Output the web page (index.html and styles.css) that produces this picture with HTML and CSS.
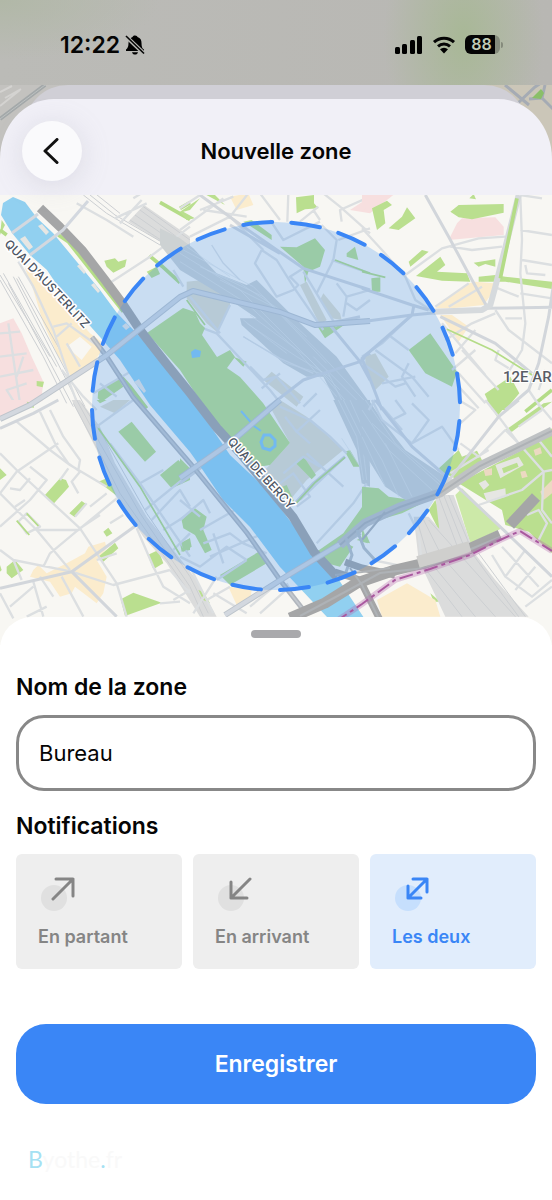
FILE: index.html
```html
<!DOCTYPE html>
<html lang="fr">
<head>
<meta charset="utf-8">
<meta name="viewport" content="width=device-width, initial-scale=1">
<title>Nouvelle zone</title>
<link rel="stylesheet" href="styles.css">
</head>
<body>
<div class="status">
  <div class="status-side">
    <span class="time">12:22</span>
    <svg class="bell" viewBox="0 0 20 22" aria-hidden="true"><path d="M10 1.500c1.600 0 2.300.8 2.500 1.500 3 1 4 3.300 4 6 0 4 .8 5.500 2.500 6.600v1.400H1v-1.400C2.800 14 3.400 12.800 3.500 9c0-3 1.300-5 4-6 .3-.8 1-1.500 2.500-1.500z"/><path d="M7 18.200h6c-.4 1.500-1.500 2.300-3 2.300s-2.600-.8-3-2.300z"/><path class="slash-gap" d="M0 1.500 19.500 20"/><path class="slash" d="M1 2 19 19.500"/></svg>
  </div>
  <div class="status-side">
    <svg class="signal" viewBox="0 0 28 18" aria-hidden="true"><rect x="0" y="11" width="5" height="7" rx="1.500"/><rect x="7" y="8" width="5" height="10" rx="1.500"/><rect x="15" y="4" width="5" height="14" rx="1.500"/><rect x="22" y="0" width="5" height="18" rx="1.500"/></svg>
    <svg class="wifi" viewBox="0 0 24 18" aria-hidden="true"><path class="arc" d="M2 6.200a14.500 14.500 0 0 1 20 0"/><path class="arc" d="M6 10.300a9 9 0 0 1 12 0"/><path d="M8 13.300a6 6 0 0 1 8 0L12 17.500z"/></svg>
    <div class="battery"><span>88</span></div>
  </div>
</div>

<header class="top">
  <svg class="backdrop" viewBox="0 85 552 110" preserveAspectRatio="xMidYMin slice" aria-hidden="true">
    <path fill="#c3c2bf" d="M0 85h276v110H0z"/><path fill="#cbc6b8" d="M276 85h276v110H276z"/>
    <g fill="none" stroke="#d4d3d1" stroke-width="2"><path d="M0 92l12-6M5 98l16-9M0 106l20-16"/></g>
    <path fill="none" stroke="#a3a8a9" stroke-width="4" d="M0 119 45 85"/><path fill="none" stroke="#bcc0c0" stroke-width="1" d="M0 119 45 85"/>
    <g fill="none" stroke="#a5abb4" stroke-width="3"><path d="M505 85l24 20M518 103l17-16 6-4M529 99l13-1 12 12M545 85l-3 13"/></g>
    <path fill="#8abf68" d="M532 98l9-9 3 4-3 6z"/>
  </svg>
  <div class="peek"></div>
  <nav class="nav">
    <button class="back" type="button" aria-label="Retour"><svg viewBox="0 0 16 26" aria-hidden="true"><path d="M14 1.500 2 13l12 11.500"/></svg></button>
    <h1>Nouvelle zone</h1>
    <span></span>
  </nav>
</header>

<svg class="map" viewBox="0 195 552 450" role="img" aria-label="Carte de la zone">
  <path class="land" d="M0 195h552v450H0z"/>

  <!-- north-west -->
  <g transform="translate(0 190) scale(.33333)">
    <path class="pink" d="M0 400 40 385 65 430 95 500 130 575 125 620 60 650 0 690z"/>
    <path class="sand" d="M75 235 100 240 130 290 190 340 270 430 310 460 300 490 270 530 220 570 170 490 130 400 100 300z"/>
    <path class="land" d="M200 470 240 440 275 470 245 510z"/>
    <path class="green" d="M313 212 345 205 355 215 380 208 375 230 340 248 320 230zM110 573l22 2-4 17-18-4zM80 635l20 3 2 15-20-2zM440 245l30-15 10 22-25 12zM5 90l10 15-15 30zM295 600l60-35 15 25-65 45-12-10z"/>
    <path class="yard" d="M432 45 570 140 570 210 490 160 385 95z"/>
    <g class="rail"><path d="M420 60 570 170M405 75 570 190M390 90 560 200M430 50 570 150M250 15 320 70 480 165M270 15 345 75 500 165M285 10 360 70"/><path d="M40 260 240 650M50 265 255 650M25 280 220 650M0 270 130 500 200 640M0 255 150 500M10 250 170 530M55 260 180 480"/></g>
    <g class="gline"><path d="M175 135 205 155 370 365M480 37 570 88M540 55 570 38M448 197 485 228 540 278M0 120 20 135M345 540 390 590 440 655"/></g>
    <g class="road"><path d="M55 215 100 290 160 420 210 570M160 410 200 400 290 465M200 460 240 530M170 440 215 400M335 275 450 200 570 110M345 85 440 40M360 100 425 30M230 40 320 90 400 140M400 25 440 0M0 430 60 425M0 500 80 490M0 560 100 540M25 400 45 540 60 640M45 640 20 600 80 580M70 500 50 560M280 610 400 540M205 570 240 660M185 540 250 620 290 660M300 580 350 620M550 290 520 240"/></g>
  </g>

  <!-- north -->
  <g transform="translate(180 190) scale(.33333)">
    <path class="sand" d="M150 20 205 10 220 45 170 60z"/>
    <path class="pink" d="M510 60 570 20 640 15 570 70z"/>
    <path class="tan" d="M20 275 70 270 150 325 150 345 110 425 80 400 20 325zM360 285 380 275 440 390 420 405zM430 310 480 370 485 390 455 385 420 330zM250 570 275 545 370 620 350 650z"/>
    <path class="green" d="M348 22 402 15 402 40 415 55 375 58 350 70zM300 170 350 172 405 145 435 180 420 230 385 245 375 280 370 230zM70 10 100 10 135 45zM0 65 60 25 30 60 10 65 45 85 20 90zM190 95 215 90 275 135 275 150zM410 405 500 400 435 445zM500 190 525 170 535 210 500 200zM160 500 200 515 190 530z"/>
    <path class="rail-yard" d="M-60 115 0 145 40 175 110 250 200 285 230 270 350 390 470 500 570 640 590 740 470 640 430 560 380 560 310 520 185 405 180 385 230 385 150 330 0 240-60 165z"/>
    <g class="rail light"><path d="M0 190 180 300 400 520 520 660M10 180 220 290 420 490 570 650M0 215 200 340 350 480 470 620M20 170 150 260M60 230 250 320 440 520M190 440 320 520 420 550M200 400 350 500 450 560M210 375 380 500 480 600M80 240 180 280 330 380M440 540 500 660M400 500 560 660M120 270 280 350 380 440M190 390 320 490"/></g>
    <path class="road thin" d="M95 165 130 220 180 270M190 440 300 505 400 550"/>
    <g class="road"><path d="M0 120 130 25M0 55 60 15M30 140 150 80 205 10M160 20 60 60M240 10 300 90M325 10 322 95M360 95 415 50M430 10 480 50 570 130M485 95 480 60 570 20M420 90 400 60M245 180 225 220 290 320 340 300 355 285 330 260 370 235M245 180 290 210 340 290 430 420M270 90 310 150 420 95M425 105 470 150 460 210 410 310M475 150 570 115M470 280 500 320 570 300M500 320 490 380M500 340 530 360 570 330M370 245 470 410M70 415 110 430 150 345M110 430 270 600 310 650M210 530 250 570 290 560 360 640M245 595 300 550M370 650 410 610M150 80 250 180M455 210 570 250M30 320 120 430M70 60 200 80"/></g>
    <g class="road mid"><path d="M60 15 190 110 370 235 570 300M150 105 300 190M450 405 540 515 570 570M450 400 540 380M430 550 540 515 570 490M240 670 370 570 430 550"/></g>
    <path class="gline thin" d="M20 330 75 405M465 210 570 250"/>
  </g>

  <!-- north-east -->
  <g transform="translate(362 190) scale(.33333)">
    <path class="pink" d="M0 15 90 15 60 40 0 60zM285 100 300 85 400 82 425 110 425 135 260 150z"/>
    <path class="sand" d="M220 355 260 320 320 280 340 275 395 280 390 310 365 345 270 355zM235 375 270 375 320 410 290 455z"/>
    <path class="green" d="M30 55 75 32 90 45 65 60 70 100 45 120 38 90zM80 115 120 80 135 52 160 85 110 120zM265 65 290 45 425 42 425 68 330 88 290 82zM322 25 335 12 342 28zM140 215 180 180 200 185 145 230zM162 258 235 200 250 225 225 245 315 250 325 275 240 272zM335 218 400 208 400 230 370 222 350 230zM350 260 400 255 430 260 570 275 570 297 430 275 350 275zM140 480 205 430 240 480 285 545 270 590 190 550zM368 612 445 560 472 610 430 660 390 660zM28 265 55 262 55 305 30 305z"/>
    <path class="tan" d="M10 500 40 490 80 560 40 600 10 540z"/>
    <g class="road"><path d="M130 255 240 175 350 145 430 140M265 170 330 180 420 170M475 20 480 150 475 250 490 400 480 480 440 545M475 120 570 135M480 210 570 225M490 225 495 250 550 255M475 310 570 325M475 15 540 25M395 290 470 320M220 350 320 280M260 350 360 290M0 115 60 180 130 260 160 330 220 370M250 450 330 400 400 370M240 400 370 555M280 490 340 420M300 480 410 600M270 540 340 480M400 360 440 420 570 520M430 385 480 385M410 480 400 510 440 535M0 500 60 460 150 375M80 435 140 480M0 520 60 560 100 590 130 580M40 480 150 560 200 620M290 550 370 640M290 590 350 655M500 600 540 660M550 540 530 600M140 520 120 560 160 620M60 580 160 560"/></g>
    <g class="road mid"><path d="M190 15 260 140 330 270 375 350M0 295 150 345 200 360M0 395 150 375 220 368M155 350 150 375 0 505 60 660M235 380 400 460 510 550M575 280 560 380 530 520 500 600 430 660M370 355 570 352"/></g>
    <g class="road big"><path d="M215 365 360 360 385 345 400 290 470 15"/></g>
    <g class="gline"><path d="M465 25 415 265M490 665 570 600"/></g>
    <g class="gline thin"><path d="M255 418 390 480 510 555M0 245 70 262"/></g>
  </g>

  <!-- south-west -->
  <g transform="translate(0 400) scale(.33333)">
    <path class="pink" d="M0 0 130 0 95 20 20 50 0 40z"/>
    <path class="sand" d="M100 510 115 495 140 520 200 490 255 460 265 440 315 425 320 445 290 480 320 530 310 580 290 610 225 560 215 580 180 590 150 545 90 530z"/>
    <path class="green" d="M135 285 180 235 198 240 207 260 160 312zM208 340 245 303 258 312 225 352zM80 5 105 10 90 20zM0 205 20 225 0 240zM20 500 45 480 70 510 35 535 20 520zM0 495 5 510 0 515zM310 395 325 383 337 400 320 410zM295 470 345 428 355 445 310 485zM295 245 320 235 360 270 350 287zM443 465 475 450 490 490 460 508zM362 598 400 578 485 608 375 648zM355 95 395 65 468 155 435 185zM480 225 535 180 570 215 570 240 515 265zM545 365 570 345 570 385zM540 430 570 415 570 450 545 455zM290 0 320 0 300 10z"/>
    <path class="tan" d="M300 20 340 0 390 0 345 40z"/>
    <path class="yard" d="M215 0 240 0 300 80 345 190 440 350 520 450 590 540 650 650 600 650 500 490 430 410 350 290 290 150z"/>
    <g class="rail"><path d="M230 0 300 130 420 340 570 560 610 650M245 10 310 110 440 340 570 530 625 640M220 10 300 160 360 280 500 480 570 580"/></g>
    <g class="road"><path d="M50 65 150 150 210 195 320 260M120 35 170 140 205 190 240 215M150 30 190 110 240 180 235 210M0 160 50 210 240 385M0 280 50 215 175 130M90 200 140 240 90 300 0 380M30 265 60 270 90 235M0 280 50 330 110 390 235 390 350 295M45 320 75 300M110 390 210 510M240 215 215 245 235 280M270 320 320 280M330 370 370 345M240 385 350 550 380 650M300 345 240 385 150 460 130 500M40 480 0 450M40 480 215 515 340 555 510 510M185 530 250 650M65 540 40 480M0 580 40 655M100 545 130 650M30 620 100 560M80 650 140 620M120 530 160 590M410 385 460 500 490 560 570 610M510 510 570 580M520 600 570 570M480 610 540 605M350 460 290 480M55 365 80 400 120 380 80 340 55 365M205 205 180 240M225 350 260 310"/></g>
    <g class="road"><path d="M290 80 400 0M330 130 420 250 570 470M420 250 490 210M435 330 570 220M455 360 540 270 570 320M490 390 570 340M520 450 570 400"/></g>
    <g class="road mid"><path d="M0 85 100 40 175 0M0 565 215 515 410 375M215 515 350 650"/></g>
    <path class="gline thin" d="M295 85 420 260 540 465M80 340 115 378M50 362 88 405"/>
  </g>

  <!-- south -->
  <g transform="translate(180 400) scale(.33333)">
    <path class="tan" d="M270 20 300 0 380 50 490 150 380 240 330 300 290 260 250 215 330 130z"/>
    <path class="green" d="M0 175 35 210 0 235zM5 360 45 325 80 350 70 390 95 450 75 460 45 405 10 385zM5 430 30 415 35 440 10 455zM120 525 245 450 260 490 150 555zM348 190 372 172 408 225 395 238zM495 155 510 150 540 200 520 200zM410 455 490 400 540 330 580 270 580 360 480 420 520 440 480 500 440 490zM530 420 560 405 570 430zM55 570 70 575 90 610 70 600zM295 265 320 255 345 310 320 300z"/>
    <path class="sand" d="M145 560 215 570 210 605 170 615z"/>
    <path class="rail-yard" d="M460 0 570 0 570 260 545 250 530 150z"/>
    <g class="rail light"><path d="M475 0 530 110 550 240M490 0 545 110 560 240M510 0 560 110 570 200M485 115 540 200"/></g>
    <g class="road"><path d="M315 50 350 95 420 30M350 95 390 130M300 20 390 60 450 110 500 160M380 160 490 260M490 175 360 300M300 250 340 220 390 290 350 320M310 220 370 170 420 200M0 360 70 300 90 340M0 300 60 350M60 390 200 310M70 430 150 400 190 430 260 460M90 470 250 400M100 400 130 490M0 470 60 500 140 440 200 480M110 540 200 480M170 340 200 310M80 600 150 560M30 500 100 640M100 580 200 640M210 620 300 545M240 640 330 560M410 430 520 310 560 250M40 640 110 530M320 550 350 610"/></g>
    <g class="road mid"><path d="M0 250 60 205 150 130 300 0M345 310 400 250 495 170"/></g>
    <path class="gline thin" d="M348 310 405 248 495 172"/>
  </g>

  <!-- south-east -->
  <g transform="translate(362 400) scale(.33333)">
    <path class="green" d="M0 260 50 265 80 290 150 300 220 290 120 340 0 375zM375 0 445 0 405 50zM430 90 545 10 570 5 490 65 450 95zM225 210 290 150 300 170 345 152 365 190 290 240zM290 250 480 150 570 85 570 460 500 395 430 375 420 330zM200 330 220 300 260 415 240 410zM0 380 18 430 0 425zM205 580 235 605 215 605z"/>
    <path fill="#cce9a8" d="M280 285 300 265 420 385 325 430z"/>
    <path class="pinkish" d="M365 210 390 205 390 225 370 228zM475 215 490 212 497 230 480 235zM515 150 535 142 540 160 520 167zM535 275 570 240 570 280 545 300z"/>
    <path class="block" d="M365 280 430 265 432 290 375 305zM350 250 370 240 382 255 365 270zM400 195 470 170 485 195 415 235z"/>
    <path class="green" d="M420 205 465 188 470 200 425 220z"/>
    <path class="sand" d="M45 600 135 550 220 600 235 650 60 650z"/>
    <path class="rail-yard" d="M-10 0 20 0 60 60 130 150 265 240 220 290 130 300 70 260 20 180 0 160z"/>
    <path class="yard" d="M220 285 275 285 330 440 240 460zM155 350 200 350 270 430 330 450 400 540 500 650 250 650 170 480z"/>
    <g class="rail light"><path d="M0 30 80 150 210 270M10 0 100 130 240 250M0 80 60 180 110 290M0 110 70 260M30 70 160 190 240 260M70 130 150 290"/></g>
    <g class="rail"><path d="M230 290 290 450M245 285 310 450M260 285 325 440M165 360 200 480 340 650M180 350 240 470 400 650M200 360 290 460 460 650M185 500 300 650M330 460 470 650M350 460 490 650"/></g>
    <g class="road"><path d="M295 70 340 30 290 0M295 130 350 170 430 90 470 130M370 0 410 50 470 130 545 215 570 210M520 0 570 60M470 80 540 30M30 0 60 60 150 130 240 80 290 150M60 20 120 90M100 0 130 40 90 60M150 10 200 60 150 130M545 215 480 270 350 315M545 215 540 330 570 370M495 345 530 330 555 370 530 420M390 465 430 530 510 590 570 540M420 440 530 560M430 530 490 450M460 570 520 500M490 620 570 560M140 340 170 400 180 500M30 480 130 500M530 120 570 170M265 220 380 150M40 0 20 30"/></g>
    <g class="road mid"><path d="M40 0 150 140 265 240 430 395 570 530M265 235 410 50 470 0"/></g>
  </g>

  <!-- park and river -->
  <path class="green" d="M147 333 183 308 195 312 200 323 205 328 202 335 217 357 230 350 235 357 227 368 240 377 263 403 290 443 270 465 258 467 230 440 203 405 180 370z"/>
  <path fill="#84c7f0" d="M191 352l4-3 6 2-1 6-8 1z"/>
  <path fill="none" stroke="#84c7f0" stroke-width="2" d="M241 411l13 15 7 5"/><path fill="none" stroke="#84c7f0" stroke-width="3" d="M264 435l6 0 5 5 0 6-5 4-7-2-2-6z"/>
  <path class="river" d="M1 215 3 203 13 197 25 202 37 218 53 233 77 262 100 290 117 313 143 340 190 393 213 430 230 455 267 490 287 517 313 550 337 577 372 630 340 630 327 617 280 567 250 527 223 500 200 466 190 452 150 405 120 360 100 337 67 300 47 270 30 255 12 233z"/>
  <g class="block"><path d="M38 226l4-2 7 8-3 3zM20 239l5-3 8 11-4 3zM77 266l3-2 6 8-2 2zM91 285l3-2 6 8-2 2zM134 382l5-3 7 12-2 2zM122 326l4-3 4 4-4 3z"/></g>

  <!-- quays, bridges and ring road -->
  <path class="quay-edge" d="M92 337 107 357 133 397 190 463 247 533 280 580 305 612"/>
  <path class="quay-left" d="M92 337 107 357 133 397 190 463 247 533 280 580 305 612"/>
  <path class="quay" d="M40 208 60 227 82 250 105 280 122 303 140 330 165 362 190 393 217 428 240 453 293 517 314 552 337 577"/>
  <g class="bridge-edge"><path d="M0 419 30 405 107 355 180 297 193 291 230 300 280 312 315 325 370 321M180 478 230 443 280 400M225 615 290 574 360 532"/></g>
  <g class="bridge"><path d="M0 419 30 405 107 355 180 297 193 291 230 300 280 312 315 325 370 321M180 478 230 443 280 400M225 615 290 574 360 532"/></g>
  <path class="bridge small" d="M12 233 38 214M30 255 63 230 88 201"/>
  <path class="motor-light" d="M340 545 365 523 400 507 440 493 480 466 552 431"/>
  <path class="motor-line" d="M340 545 365 523 400 507 440 493 480 466 552 431M385 512 362 540"/>
  <path class="motor-ramp" d="M346 538 352 555 345 575M357 530 364 548 375 560"/>
  <path class="motor" d="M290 618 325 603 357 583 395 570 425 563 460 553 500 535M510 525 536 497"/>
  <path class="motor narrow" d="M335 572 360 580 380 620M345 562 362 568 395 575"/>
  <path class="motor-line" d="M300 616 345 592 380 573 425 568 500 537M350 568 362 585 378 617M335 575 362 572 390 568"/>
  <path class="bridge-light" d="M418 562 470 547"/>
  <path class="border-halo" d="M335 622 362 604 395 580 430 569 470 555 500 540 520 531 552 551"/>
  <path class="border-line" d="M335 622 362 604 395 580 430 569 470 555 500 540 520 531 552 551"/>

  <!-- selected zone -->
  <circle class="zone" cx="276" cy="406" r="184"/>

  <path id="austerlitz" fill="none" d="M4 245 Q42 281 100 347"/>
  <path id="bercy" fill="none" d="M227 442 302 524"/>
  <text class="street"><textPath href="#austerlitz">QUAI D’AUSTERLITZ</textPath></text>
  <text class="street"><textPath href="#bercy">QUAI DE BERCY</textPath></text>
  <text class="district" x="503" y="382">12E AR</text>
</svg>

<main class="sheet">
  <div class="grabber"></div>
  <form class="form">
    <label class="title" for="zone-name">Nom de la zone</label>
    <input class="field" id="zone-name" type="text" value="Bureau">
    <fieldset class="group">
      <legend class="title">Notifications</legend>
      <div class="cards">
        <label class="card"><input type="radio" name="notif"><svg viewBox="0 0 36 36" aria-hidden="true"><circle cx="15" cy="22" r="13"/><path d="M14 23 34 3M17 3H34V20"/></svg><span>En partant</span></label>
        <label class="card"><input type="radio" name="notif"><svg viewBox="0 0 36 36" aria-hidden="true"><circle cx="15" cy="22" r="13"/><path d="M34 3 15 22M15 6V22H31"/></svg><span>En arrivant</span></label>
        <label class="card"><input type="radio" name="notif" checked><svg viewBox="0 0 36 36" aria-hidden="true"><circle cx="15" cy="22" r="13"/><path d="M15 22 34 3M20 3H34V16M15 10V22H28"/></svg><span>Les deux</span></label>
      </div>
    </fieldset>
    <button class="save" type="button">Enregistrer</button>
  </form>
  <footer class="mark"><b>B</b>yothe<b>.</b>fr</footer>
</main>
</body>
</html>
```
FILE: styles.css
```css
* { box-sizing: border-box; }
body { margin: 0; background: #fff; color: #050505; font-family: Inter, "Liberation Sans", sans-serif; font-size: 22px; line-height: 28px; }
button, input { font: inherit; color: inherit; }

.status { display: flex; justify-content: space-between; align-items: center; height: 85px; padding: 4px 52px 0 60px; background: radial-gradient(ellipse 80px 130px at 84% 45%, #a8b896, transparent), radial-gradient(ellipse 160px 60px at 0 0, #b1b8a7, transparent), linear-gradient(90deg, #bbbbb7, #b8b7b3); }
.status-side { display: flex; align-items: center; gap: 9px; }
.time { font-weight: 600; font-size: 23px; }
.bell { width: 20px; height: 22px; margin-left: -4px; }
.slash { fill: none; stroke: #050505; stroke-width: 1.6; }
.slash-gap { fill: none; stroke: #b9b9b5; stroke-width: 4; }
.signal { width: 28px; height: 18px; }
.wifi { width: 24px; height: 18px; }
.arc { fill: none; stroke: #050505; stroke-width: 3; }
.battery { position: relative; width: 35px; height: 19px; border-radius: 6px; background: linear-gradient(90deg, #050505 87%, #858b7c 87%); color: #c1cbb6; text-align: center; font-size: 16px; font-weight: 600; line-height: 19px; padding-right: 2px; }
.battery::after { content: ""; position: absolute; right: -3px; top: 7px; width: 2px; height: 6px; border-radius: 0 3px 3px 0; background: #858b7c; }

.top { position: relative; isolation: isolate; }
.backdrop { position: absolute; inset: 0; width: 100%; height: 100%; z-index: -1; }
.peek { height: 50px; margin: 0 24px -36px; border-radius: 44px 44px 0 0; background: #d0cfd6; }
.nav { position: relative; display: grid; grid-template-columns: 60px 1fr 60px; align-items: center; height: 96px; padding: 8px 22px 0; border-radius: 54px 54px 0 0 / 60px 60px 0 0; background: #f1f0f7; }
.nav h1 { margin: 0; text-align: center; font-size: 22px; font-weight: 600; line-height: 28px; }
.back { display: grid; place-items: center; width: 60px; height: 60px; padding: 0 2px 0 0; border: 0; border-radius: 50%; background: #fafafc; box-shadow: 0 4px 28px #9a9ab040; }
.back svg { width: 16px; height: 26px; fill: none; stroke: #111; stroke-width: 3; stroke-linecap: round; stroke-linejoin: round; }

.map { display: block; width: 100%; height: auto; }
.land { fill: #f8f7f3; }
.green { fill: #badf8f; }
.pink { fill: #f7dfdf; }
.pinkish { fill: #ecd9c2; }
.sand { fill: #fbeccd; }
.tan { fill: #e0dece; }
.yard { fill: #dbdcdc; }
.rail-yard { fill: #cdd2d3; }
.block { fill: #e6e6e3; }
.river { fill: #91d0f0; }
.rail { fill: none; stroke: #cccfd2; stroke-width: 3; }
.rail.light { stroke: #dee2e4; stroke-width: 2; }
.road { fill: none; stroke: #dcdfe1; stroke-width: 7; stroke-linejoin: round; }
.road.mid { stroke: #d2d6db; stroke-width: 9; }
.road.big { stroke: #d6dadd; stroke-width: 18; }
.road.thin { stroke-width: 4; }
.gline { fill: none; stroke: #b4dc87; stroke-width: 11; }
.gline.thin { stroke-width: 5; }
.quay { fill: none; stroke: #a5a6a7; stroke-width: 9; stroke-linejoin: round; }
.quay-edge { fill: none; stroke: #b1b6bd; stroke-width: 5; }
.quay-left { fill: none; stroke: #c3c8ce; stroke-width: 2; }
.bridge-edge { fill: none; stroke: #bdc4cb; stroke-width: 6; stroke-linejoin: round; }
.bridge { fill: none; stroke: #d3d8df; stroke-width: 4; stroke-linejoin: round; }
.bridge.small { stroke-width: 3; }
.motor { fill: none; stroke: #a5a6a7; stroke-width: 11; stroke-linejoin: round; }
.motor.narrow { stroke-width: 7; }
.motor-light { fill: none; stroke: #bfc2c4; stroke-width: 9; }
.motor-ramp { fill: none; stroke: #bac0c4; stroke-width: 3; }
.motor-line { fill: none; stroke: #aeb2b6; stroke-width: 2; }
.bridge-light { fill: none; stroke: #cfcfcd; stroke-width: 12; }
.border-halo { fill: none; stroke: #b565ae55; stroke-width: 6; }
.border-line { fill: none; stroke: #a9589f; stroke-width: 2; stroke-dasharray: 14 4 4 4; }
.zone { fill: #3c8ff040; stroke: #3a86f6; stroke-width: 4; stroke-linecap: round; stroke-dasharray: 29 19.17; stroke-dashoffset: -15; }
.street { font: 500 12px Inter, sans-serif; fill: #4c5563; stroke: #fff; stroke-width: 3; paint-order: stroke; stroke-linejoin: round; }
.district { font: 500 15px Roboto, sans-serif; fill: #595d66; stroke: #fff; stroke-width: 2; paint-order: stroke; }

.sheet { position: relative; margin-top: -28px; padding: 13px 16px 24px; border-radius: 32px 32px 0 0; background: #fff; }
.grabber { width: 50px; height: 8px; margin: 0 auto 35px; border-radius: 4px; background: #a9a9ac; }
.form { display: flex; flex-direction: column; }
.title { display: block; padding: 0; font-size: 23px; font-weight: 600; }
.field { width: 100%; height: 76px; margin: 14px 0 21px; padding: 0 20px; border: 3px solid #888; border-radius: 28px; background: #fff; outline: 0; }
.group { margin: 0; padding: 0; border: 0; min-width: 0; }
.cards { display: grid; grid-template-columns: repeat(3, 1fr); gap: 11px; margin-top: 14px; }
.card { position: relative; display: flex; flex-direction: column; gap: 14px; height: 115px; padding: 22px 22px 0; border-radius: 6px; background: #eee; color: #858585; font-size: 18px; font-weight: 600; line-height: 22px; }
.card input { position: absolute; opacity: 0; margin: 0; }
.card svg { width: 36px; height: 36px; margin-left: 1px; fill: none; stroke: currentColor; stroke-width: 3; stroke-linecap: round; stroke-linejoin: round; }
.card circle { fill: #e0e0e0; stroke: none; }
.card:has(input:checked) { background: #e1edfc; color: #3a86f6; }
.card:has(input:checked) circle { fill: #c6dffd; }
.save { height: 80px; margin-top: 55px; border: 0; border-radius: 30px; background: #3a86f6; color: #fff; font-size: 23px; font-weight: 600; }
.mark { margin: 41px 0 0 12px; color: #f9f9f9; font-family: Lato, sans-serif; font-size: 23px; }
.mark b { color: #a5e1f3; font-weight: 400; }
```
